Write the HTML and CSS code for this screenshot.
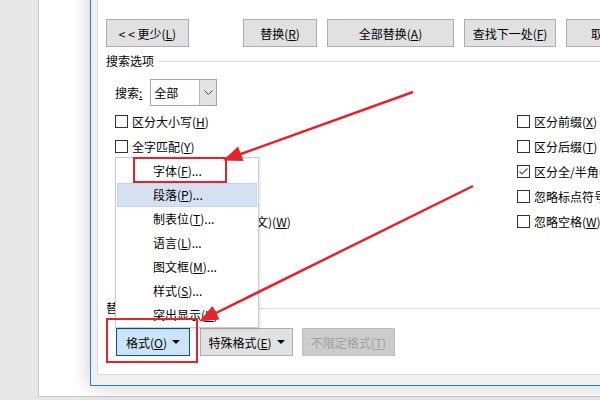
FILE: index.html
```html
<!DOCTYPE html>
<html>
<head>
    <title>查找和替换</title>
    <link rel="stylesheet" href="styles.css">
</head>
<body>
    <div class="desk">
        <div class="side"></div>
        <div class="doc">
            <div class="dialog">
                <div class="panel">
                    <div class="btn-row">
                        <button class="btn btn-less">&lt; &lt; 更少(<u>L</u>)</button>
                        <button class="btn btn-replace">替换(<u>R</u>)</button>
                        <button class="btn btn-all">全部替换(<u>A</u>)</button>
                        <button class="btn btn-next">查找下一处(<u>F</u>)</button>
                        <button class="btn btn-cancel">取消</button>
                    </div>

                    <div class="group-title">搜索选项</div>

                    <div class="search-row">
                        <span>搜索<u>:</u></span>
                        <div class="select">
                            <span class="select-value">全部</span>
                            <span class="select-arrow">
                                <svg width="9" height="5" viewBox="0 0 9 5"><polyline points="0.5,0.5 4.5,4.5 8.5,0.5" fill="none" stroke="#444" stroke-width="1"/></svg>
                            </span>
                        </div>
                    </div>

                    <div class="options">
                        <div class="opt-col opt-left">
                            <div class="opt"><span class="box"></span>区分大小写(<u>H</u>)</div>
                            <div class="opt"><span class="box"></span>全字匹配(<u>Y</u>)</div>
                            <div class="opt"><span class="box"></span>使用通配符(<u>U</u>)</div>
                            <div class="opt"><span class="box"></span>同音(英文)(<u>K</u>)</div>
                            <div class="opt"><span class="box"></span>查找单词的所有形式(英文)(<u>W</u>)</div>
                        </div>
                        <div class="opt-col">
                            <div class="opt"><span class="box"></span>区分前缀(<u>X</u>)</div>
                            <div class="opt"><span class="box"></span>区分后缀(<u>T</u>)</div>
                            <div class="opt">
                                <span class="box">
                                    <svg width="11" height="11" viewBox="0 0 11 11"><polyline points="1.5,5.5 4,8 9.5,2.5" fill="none" stroke="#555" stroke-width="1.2"/></svg>
                                </span>区分全/半角(<u>M</u>)
                            </div>
                            <div class="opt"><span class="box"></span>忽略标点符号(<u>S</u>)</div>
                            <div class="opt"><span class="box"></span>忽略空格(<u>W</u>)</div>
                        </div>
                    </div>

                    <div class="group-title group-replace">替换</div>

                    <div class="btn-row bottom-row">
                        <button class="btn btn-format">格式(<u>O</u>) <span class="caret"></span></button>
                        <button class="btn btn-special">特殊格式(<u>E</u>) <span class="caret"></span></button>
                        <button class="btn btn-noformat" disabled>不限定格式(<u>T</u>)</button>
                    </div>
                </div>
            </div>
        </div>
    </div>

    <!-- dropdown opened from the 格式 button -->
    <div class="menu">
        <div class="menu-item">字体(<u>F</u>)...</div>
        <div class="menu-item active">段落(<u>P</u>)...</div>
        <div class="menu-item">制表位(<u>T</u>)...</div>
        <div class="menu-item">语言(<u>L</u>)...</div>
        <div class="menu-item">图文框(<u>M</u>)...</div>
        <div class="menu-item">样式(<u>S</u>)...</div>
        <div class="menu-item">突出显示(<u>H</u>)</div>
    </div>

    <!-- annotation marks -->
    <div class="mark mark-font"></div>
    <div class="mark mark-format"></div>
    <svg class="arrows" width="600" height="400" viewBox="0 0 600 400">
        <line x1="413" y1="92" x2="238" y2="155" stroke="#e8212b" stroke-width="2.5"/>
        <polygon points="223,160.5 243.5,161 238,146.5" fill="#e8212b"/>
        <line x1="473" y1="186" x2="214" y2="314" stroke="#e8212b" stroke-width="2.5"/>
        <polygon points="199,321.5 219.5,319.5 212.5,306" fill="#e8212b"/>
    </svg>
</body>
</html>
```

FILE: styles.css
```css
body {
    margin: 0;
    width: 600px;
    height: 400px;
    overflow: hidden;
    position: relative;
    background-color: #e7e7e7;
    font-family: "Noto Sans CJK SC", sans-serif;
    font-size: 12px;
    line-height: 16px;
    color: #000;
}

u {
    text-decoration-thickness: 1px;
    text-underline-offset: 1px;
}

.desk {
    display: flex;
    height: 397px;
}

.side {
    width: 38px;
    flex-shrink: 0;
    background-color: #e7e7e7;
    border-right: 1px solid #c9c9c9;
}

.doc {
    flex: 1;
    height: 396px;
    background-color: #fff;
    border-bottom: 1px solid #c9c9c9;
}

/* dialog frame */
.dialog {
    margin-top: -20px;
    margin-left: 51px;
    width: 620px;
    height: 405px;
    padding-left: 6px;
    background-color: #f0f0f0;
    border-left: 1px solid #2b7bd4;
    border-bottom: 1px solid #2b7bd4;
    box-shadow: 0 0 18px rgba(0, 0, 0, 0.22);
}

.panel {
    height: 395px;
    box-sizing: border-box;
    padding: 39px 0 0 8px;
    background-color: #fff;
    border-left: 1px solid #dadada;
    border-bottom: 1px solid #dadada;
}

.btn-row {
    display: flex;
}

.btn {
    flex-shrink: 0;
    height: 28px;
    padding: 0;
    font-family: inherit;
    font-size: 12px;
    color: #000;
    background-color: #e1e1e1;
    border: 1px solid #adadad;
    display: flex;
    align-items: center;
    justify-content: center;
}

.btn-less { width: 83px; }
.btn-replace { width: 74px; margin-left: 54px; }
.btn-all { width: 127px; margin-left: 10px; }
.btn-next { width: 92px; margin-left: 10px; }
.btn-cancel { width: 74px; margin-left: 10px; }

.group-title {
    display: flex;
    align-items: center;
    margin-top: 6px;
    height: 16px;
}

.group-title::after {
    content: "";
    flex: 1;
    margin-left: 5px;
    border-top: 1px solid #dcdcdc;
}

.search-row {
    display: flex;
    align-items: center;
    margin-top: 10px;
    padding-left: 9px;
}

.select {
    display: flex;
    margin-left: 8px;
    width: 67px;
    height: 27px;
    box-sizing: border-box;
    border: 1px solid #a5a5a5;
    background-color: #fff;
}

.select-value {
    flex: 1;
    padding-left: 3px;
    line-height: 25px;
}

.select-arrow {
    width: 16px;
    display: flex;
    align-items: center;
    justify-content: center;
    background-color: #e3e3e3;
    border-left: 1px solid #b9b9b9;
}

.options {
    display: flex;
    margin-top: 3px;
    padding-left: 9px;
}

.opt-left {
    width: 402px;
}

.opt {
    display: flex;
    align-items: center;
    height: 25px;
    white-space: nowrap;
}

.box {
    width: 13px;
    height: 13px;
    box-sizing: border-box;
    margin-right: 4px;
    border: 1px solid #333;
    background-color: #fff;
    display: flex;
    align-items: center;
    justify-content: center;
}

.group-replace {
    margin-top: 66px;
}

.bottom-row {
    margin-top: 12px;
    padding-left: 10px;
}

.btn-format {
    width: 74px;
    background-color: #cce4f7;
    border-color: #005499;
}

.btn-special {
    width: 93px;
    margin-left: 10px;
}

.btn-noformat {
    width: 93px;
    margin-left: 9px;
    color: #a0a0a0;
    background-color: #cccccc;
    border-color: #bfbfbf;
}

.caret {
    display: inline-block;
    margin-left: 5px;
    border-left: 4px solid transparent;
    border-right: 4px solid transparent;
    border-top: 4px solid #000;
}

/* dropdown menu */
.menu {
    position: absolute;
    left: 115px;
    top: 157px;
    width: 142px;
    height: 168px;
    padding-top: 1px;
    background-color: #fff;
    border: 1px solid #cccccc;
    box-shadow: 1px 1px 3px rgba(0, 0, 0, 0.12);
}

.menu-item {
    height: 24px;
    line-height: 24px;
    padding-left: 36px;
    margin: 0 1px;
    box-sizing: border-box;
}

.menu-item.active {
    line-height: 22px;
    background-color: #d5e1f2;
    border: 1px solid #c3d4ee;
    padding-left: 35px;
}

/* red annotation boxes and arrows */
.mark {
    position: absolute;
    box-sizing: border-box;
    border: 2px solid #e8212b;
}

.mark-font {
    left: 133px;
    top: 157px;
    width: 94px;
    height: 26px;
}

.mark-format {
    left: 106px;
    top: 318px;
    width: 92px;
    height: 45px;
}

.arrows {
    position: absolute;
    left: 0;
    top: 0;
}
```
